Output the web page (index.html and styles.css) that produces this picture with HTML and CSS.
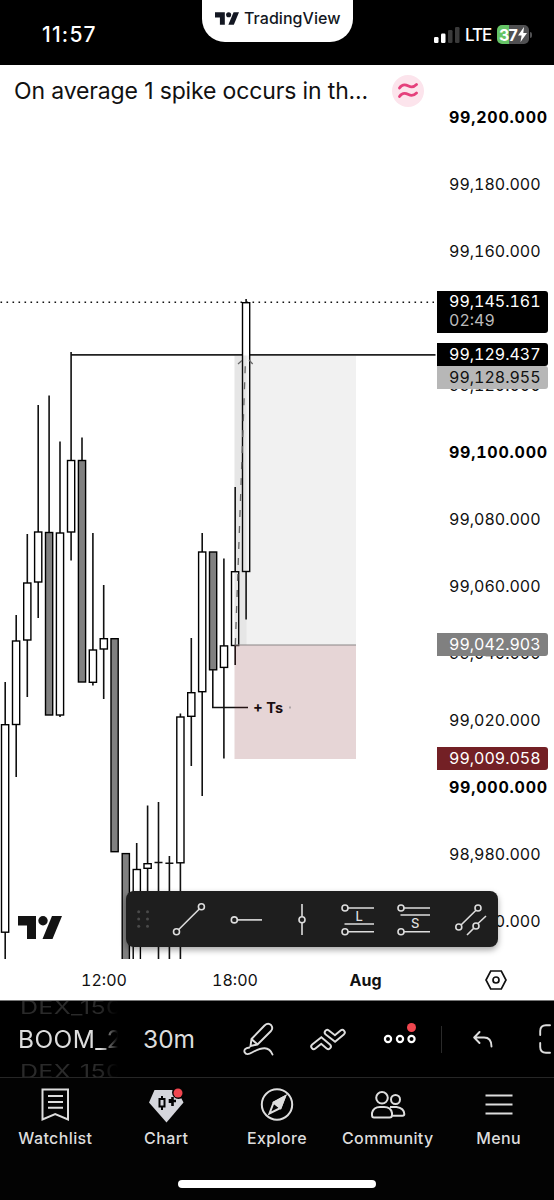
FILE: index.html
```
<!DOCTYPE html>
<html lang="en">
<head>
<meta charset="utf-8">
<title>TradingView</title>
<link rel="stylesheet" href="styles.css">
</head>
<body>
<div class="app">
  <header class="status">
    <div class="clock">11:57</div>
    <div class="brand">
      <svg class="brand-mark" width="24" height="13" viewBox="0 0 44 23"><path d="M0 0h18v23H9V9.500H0z"/><circle cx="25" cy="4.700" r="4.700"/><path d="M34 0h10L34.500 23H24.500z"/></svg>
      <span class="brand-name">TradingView</span>
    </div>
    <div class="indicators">
      <svg width="26" height="18" viewBox="0 0 26 18"><rect x="0" y="11" width="4.500" height="6" rx="1.200" fill="#fff"/><rect x="7" y="7.500" width="4.500" height="9.500" rx="1.200" fill="#fff"/><rect x="14" y="4" width="4.500" height="13" rx="1.200" fill="#3a3a3a"/><rect x="21" y="1" width="4.500" height="16" rx="1.200" fill="#3a3a3a"/></svg>
      <span class="network">LTE</span>
      <div class="battery"><span>37</span><svg width="9" height="15" viewBox="0 0 9 15"><path d="M6 0L0 8.500h3.600L2.500 15 9 6H5.300z" fill="#fff"/></svg></div>
      <i class="battery-tip"></i>
    </div>
  </header>

  <main class="chart">
    <div class="legend">
      <span class="legend-text">On average 1 spike occurs in th...</span>
      <span class="legend-badge"><svg width="20" height="18" viewBox="0 0 20 18"><path d="M1.500 6C4.500 1.500 7.500 2.500 10.500 4S16 5 18.500 2.500M1.500 14.500C4.500 10 7.500 11 10.500 12.500S16 13.500 18.500 11"/></svg></span>
    </div>
    <svg class="plot" width="437" height="894" viewBox="0 65 437 894">
      <path class="last-price" d="M0.500 302.300H434"/>
      <path class="level" d="M71 354.800H435.500"/>
      <g class="wicks">
        <path d="M5.200 682V724M5.200 932V959M16.200 615V641M16.200 724V777M27.300 534V583M27.300 640V697M38.200 405V532M38.200 582V618M49.100 395.500V532M60 441.500V533M60 715V717M71.100 352V460M71.100 532V560.500M82 437.500V460M92.900 533V650M92.900 682V685.500M103.700 585V638M103.700 649V699M136.700 843V869M147.600 805.500V863M147.600 868V930M158.500 802V959M169.400 856V959M180.400 713.500V717M180.400 863V959M191.300 638V693M191.300 716V766M202.200 533V552M202.200 691V796M223.900 558.500V646M223.900 667V758.500M235.200 487V571M235.200 645V665M246.100 299V302M246.100 571V619.500M154.500 862.500H162.500M165.400 863.200H173.400"/>
      </g>
      <g class="up">
        <rect x="1.500" y="724.700" width="7.200" height="207.500"/><rect x="12.500" y="641" width="7.200" height="83.500"/><rect x="23.700" y="583" width="7.200" height="57"/><rect x="34.600" y="532" width="7.200" height="50"/><rect x="56.400" y="533" width="7.200" height="182"/><rect x="67.500" y="460.500" width="7.200" height="71.500"/><rect x="89.300" y="650" width="7.200" height="32.300"/><rect x="100.200" y="638.700" width="7.200" height="10.300"/><rect x="133.200" y="869.500" width="7.200" height="100"/><rect x="144" y="863.700" width="7.200" height="4.600"/><rect x="176.800" y="717" width="7.200" height="145.800"/><rect x="187.700" y="692.700" width="7.200" height="23.600"/><rect x="198.600" y="552" width="7.200" height="139.700"/><rect x="220.400" y="645.900" width="7.200" height="21.500"/><rect x="231.500" y="571.700" width="7.200" height="73.800"/><rect x="242.500" y="302.700" width="7.200" height="268.800"/>
      </g>
      <g class="down">
        <rect x="45.500" y="532.500" width="7.200" height="182.500"/><rect x="78.400" y="460.500" width="7.200" height="221.500"/><rect x="111" y="638.700" width="7.200" height="213"/><rect x="122.200" y="853.600" width="7.200" height="120"/><rect x="209.500" y="552" width="7.200" height="117.800"/>
      </g>
      <path class="callout" d="M212.800 670V707.500H248"/>
      <rect class="profit" x="234.500" y="355.500" width="121.500" height="289.500"/>
      <rect class="profit-progress" x="234.500" y="355.500" width="12" height="289.500"/>
      <rect class="loss" x="234.500" y="645" width="121.500" height="114"/>
      <path class="entry" d="M234.500 645H356"/>
      <path class="trend" d="M235.300 645L245.500 359"/>
      <path class="arrow" d="M238 364L242 360.500M249 360L252.700 364"/>
      <text class="note" x="253" y="712.500">+ Ts</text>
      <rect x="289.500" y="706.500" width="1" height="2" fill="#777"/>
    </svg>
    <aside class="prices">
      <span class="strong">99,200.000</span><span>99,180.000</span><span>99,160.000</span><span></span><span>99,120.000</span><span class="strong">99,100.000</span><span>99,080.000</span><span>99,060.000</span><span>99,040.000</span><span>99,020.000</span><span class="strong">99,000.000</span><span>98,980.000</span><span>98,960.000</span>
      <div class="tag tag-last">99,145.161<small>02:49</small></div>
      <div class="tag tag-level">99,129.437</div>
      <div class="tag tag-target">99,128.955</div>
      <div class="tag tag-entry">99,042.903</div>
      <div class="tag tag-stop">99,009.058</div>
    </aside>
    <div class="times">
      <span>12:00</span><span>18:00</span><b>Aug</b>
      <svg width="24" height="22" viewBox="0 0 24 22"><path d="M6.700 2h10.600L22 11l-4.700 9H6.700L2 11z"/><circle cx="12" cy="11" r="3"/></svg>
    </div>
    <svg class="watermark" width="44" height="23" viewBox="0 0 44 23"><path d="M0 0h18v23H9V9.500H0z"/><circle cx="25" cy="4.700" r="4.700"/><path d="M34 0h10L34.500 23H24.500z"/></svg>
    <div class="tools">
      <svg class="grip" width="12" height="18" viewBox="0 0 12 18"><circle cx="1.700" cy="1.700" r="1.500"/><circle cx="10.500" cy="1.700" r="1.500"/><circle cx="1.700" cy="9" r="1.500"/><circle cx="10.500" cy="9" r="1.500"/><circle cx="1.700" cy="16.300" r="1.500"/><circle cx="10.500" cy="16.300" r="1.500"/></svg>
      <svg width="36" height="36" viewBox="0 0 36 36"><path d="M7.500 28.700L28.300 8"/><circle cx="5.500" cy="30.800" r="3"/><circle cx="30.400" cy="5.800" r="3"/></svg>
      <svg width="36" height="36" viewBox="0 0 36 36"><path d="M9.500 18.900H34"/><circle cx="6.300" cy="18.900" r="3"/></svg>
      <svg width="36" height="36" viewBox="0 0 36 36"><path d="M18 3V15.500M18 21.500V34"/><circle cx="18" cy="18.700" r="3"/></svg>
      <svg width="36" height="36" viewBox="0 0 36 36"><path d="M7 7H33M3.500 23H33M7 30.700H33"/><circle cx="4" cy="7" r="3"/><circle cx="4" cy="30.700" r="3"/><text x="14.500" y="20">L</text></svg>
      <svg width="36" height="36" viewBox="0 0 36 36"><path d="M7 7H33M3.500 14H33M7 30.700H33"/><circle cx="4" cy="7" r="3"/><circle cx="4" cy="30.700" r="3"/><text x="14" y="27">S</text></svg>
      <svg width="36" height="36" viewBox="0 0 36 36"><path d="M7 24L22 9.200M13 34L19.500 27.500M24 22.500L32 15"/><circle cx="4.800" cy="26" r="3"/><circle cx="24" cy="7" r="3"/><circle cx="22" cy="25" r="3"/></svg>
    </div>
  </main>

  <section class="actions">
    <div class="wheel"><span class="ghost">DEX_150</span><span class="symbol">BOOM_2</span><span class="ghost">DEX_150</span></div>
    <div class="interval">30m</div>
    <svg class="act draw" width="32" height="34" viewBox="0 0 32 34"><path d="M8.500 17L21.500 3.500Q25 .300 28 3 30.500 6 28 9L14.500 22.500 7.500 24zM9 17.500L14 22M6.500 25.500C2 26 1 28 1.500 30Q3.500 34 9 30.500C19 25 26 24 29.500 32.500"/></svg>
    <svg class="act patterns" width="36" height="23" viewBox="0 0 36 23"><path class="band" d="M3.800 18.500L11.300 12.500 18.300 18.500"/><path class="core" d="M3.800 18.500L11.300 12.500 18.300 18.500"/><path class="band" d="M17.300 4.500L25 10.500 32.200 4.500"/><path class="core" d="M17.300 4.500L25 10.500 32.200 4.500"/></svg>
    <svg class="act more" width="34" height="22" viewBox="0 0 34 22"><circle cx="5" cy="16" r="3.100"/><circle cx="17" cy="16" r="3.100"/><circle cx="28.500" cy="16" r="3.100"/><circle class="dot" cx="28.500" cy="4.500" r="4.500"/></svg>
    <i class="divider"></i>
    <svg class="act undo" width="20" height="17" viewBox="0 0 20 17"><path d="M6.500 1L1.200 6.500 6.500 12M1.500 6.500H11Q18.500 6.500 18.500 15.500"/></svg>
    <svg class="act expand" width="15" height="30" viewBox="0 0 15 30"><path d="M1.200 11V7Q1.200 1.300 7 1.300H11M1.200 19V23Q1.200 28.700 7 28.700H11"/></svg>
  </section>

  <nav class="nav">
    <a><svg width="36" height="34" viewBox="0 0 36 34"><path d="M5.500 1.500H31V31.500L18.200 26.200 5.500 31.500zM11 8H26M11 14H26M11 19.700H26"/></svg>Watchlist</a>
    <a><svg class="gem" width="36" height="34" viewBox="0 0 36 34"><path class="gem-body" d="M6.500 2H29L35.500 14.500 18.500 34.500 1 14.500z"/><path class="gem-cut" d="M14 8V11M14 18.500V22M11.500 11H16.500V18.500H11.500z"/><path class="gem-cut thick" d="M24.500 9V18M22 11V15M24 13H28"/><circle class="gem-ring" cx="30.500" cy="4.500" r="6.500"/><circle class="dot" cx="30" cy="5" r="4.500"/></svg>Chart</a>
    <a><svg width="36" height="34" viewBox="0 0 36 34"><circle cx="18" cy="16.500" r="15.200"/><path d="M26 8.500L21.500 20 10.500 25.500 14.700 14.500zM15 15L21 19.700"/><path fill="#ddd" d="M26 8.500L21.500 20 15 14.500z"/></svg>Explore</a>
    <a><svg width="36" height="34" viewBox="0 0 36 34"><circle cx="12" cy="9.800" r="5.800"/><circle cx="25.500" cy="11.500" r="4.500"/><path d="M2 27V25Q3.500 19 10 19H14Q21 19 22 25V27Q22 29.500 19.500 29.500H4Q2 29.500 2 27zM20 19H26.500Q34 20 34.300 26 34.300 27.700 32.500 27.700H22"/></svg>Community</a>
    <a><svg width="36" height="34" viewBox="0 0 36 34"><path d="M4.500 7.500H31.500M4.500 16.500H31.500M4.500 25.500H31.500"/></svg>Menu</a>
    <i class="home"></i>
  </nav>
</div>
</body>
</html>
```
FILE: styles.css
```
* { box-sizing: border-box; }
body { margin: 0; background: #000; font-family: Inter, "Liberation Sans", sans-serif; }
svg { display: block; flex: none; }
.app { width: 554px; height: 1200px; display: flex; flex-direction: column; overflow: hidden; }

.status { height: 65px; background: #000; color: #fff; display: grid; grid-template-columns: 202px 151px 201px; flex: none; }
.clock { padding: 21px 0 0 42px; font-size: 21px; line-height: 28px; font-weight: 500; letter-spacing: 1.2px; }
.brand { height: 42px; background: #fff; border-radius: 0 0 23px 23px; display: flex; align-items: center; gap: 5px; padding: 0 0 6px 13px; color: #131722; }
.brand-mark { fill: #131722; }
.brand-name { font-size: 16px; font-weight: 500; letter-spacing: 0.05px; }
.indicators { display: flex; align-items: center; padding: 2px 0 0 81px; height: 67px; }
.network { font-size: 17px; font-weight: 500; margin-left: 5px; width: 32px; letter-spacing: -1px; }
.battery { width: 32px; height: 19px; border-radius: 5px; background: linear-gradient(90deg, #65c466 37%, #505052 37%); display: flex; align-items: center; justify-content: center; gap: 1px; font-size: 16px; font-weight: 700; letter-spacing: -0.7px; }
.battery-tip { width: 2px; height: 6px; margin-left: 1px; border-radius: 0 2px 2px 0; background: #505052; }

.chart { position: relative; height: 936px; flex: none; background: #fff; display: grid; grid-template-columns: 437px 117px; grid-template-rows: 894px 42px; color: #111; border-bottom: 1px solid #777; }
.legend { position: absolute; left: 14px; top: 9px; height: 34px; display: flex; align-items: center; z-index: 1; }
.legend-text { width: 378px; font-size: 23px; white-space: nowrap; letter-spacing: -0.14px; }
.legend-badge { width: 32px; height: 32px; border-radius: 50%; background: #fce4ec; display: grid; place-items: center; }
.legend-badge path { fill: none; stroke: #e5407c; stroke-width: 2.8; stroke-linecap: round; }
.last-price { stroke: #111; stroke-width: 1.5; stroke-dasharray: 1.6 4.4; }
.level { stroke: #222; stroke-width: 1.7; }
.wicks, .callout { fill: none; stroke: #111; stroke-width: 1.6; }
.up rect { fill: #fff; stroke: #000; stroke-width: 1.4; }
.down rect { fill: #808080; stroke: #000; stroke-width: 1.4; }
.profit { fill: rgba(80, 80, 80, .08); }
.profit-progress { fill: rgba(60, 60, 60, .055); }
.loss { fill: rgba(120, 30, 35, .19); }
.entry { stroke: #8a8585; stroke-width: 1.2; }
.trend { stroke: #666; stroke-width: 1.3; stroke-dasharray: 7 9; fill: none; }
.arrow { stroke: #666; stroke-width: 1.2; fill: none; }
.note { font-size: 14.5px; font-weight: 700; fill: #1a0e10; }

.prices { position: relative; display: flex; flex-direction: column; padding: 20px 0 0 12px; height: 894px; overflow: hidden; font-size: 16px; letter-spacing: 0; font-variant-numeric: tabular-nums; }
.prices > span { height: 67px; line-height: 65px; flex: none; }
.prices .strong { font-weight: 700; color: #000; letter-spacing: .75px; }
.tag { position: absolute; left: 0; width: 111px; height: 23px; line-height: 22px; padding-left: 12px; border-radius: 0 3px 3px 0; color: #fff; }
.tag small { display: block; font-size: 16px; line-height: 17px; color: #bbb; }
.tag-last { top: 226px; height: 42px; line-height: 21px; background: #000; }
.tag-level { top: 278px; background: #000; }
.tag-target { top: 301px; background: #b7b7b7; color: #111; }
.tag-entry { top: 568px; background: #808080; }
.tag-stop { top: 682px; background: #732025; }

.times { grid-column: 1 / 3; display: grid; grid-template-columns: 38px 131px 131px 131px 123px; align-items: center; text-align: center; font-size: 16px; letter-spacing: 0; font-variant-numeric: tabular-nums; }
.times span { padding-left: 1px; }
.times span:first-child { grid-column: 2; }
.times b { font-weight: 700; }
.times svg { margin-left: 53px; fill: none; stroke: #111; stroke-width: 1.7; }
.watermark { position: absolute; left: 18px; top: 851px; fill: #131313; }
.tools { position: absolute; left: 126px; top: 826px; width: 372px; height: 56px; border-radius: 8px; background: #1e1e1e; box-shadow: 0 3px 6px rgba(0, 0, 0, .35); display: flex; align-items: center; padding-left: 11px; gap: 20.5px; }
.tools svg { fill: none; stroke: #ddd; stroke-width: 1.6; }
.tools .grip { fill: #4a4a4a; stroke: none; margin-right: 1.5px; }
.tools text { font-size: 13px; fill: #ddd; stroke: none; font-weight: 500; }

.actions { height: 77px; flex: none; background: #000; color: #ddd; display: flex; align-items: center; border-bottom: 1px solid #262626; overflow: hidden; }
.wheel { width: 100px; height: 76px; margin-left: 18px; overflow: hidden; display: flex; flex-direction: column; justify-content: center; font-size: 24.5px; line-height: 32px; -webkit-mask-image: linear-gradient(90deg, #000 82%, transparent); mask-image: linear-gradient(90deg, #000 82%, transparent); flex: none; }
.wheel span { display: block; height: 32px; flex: none; white-space: nowrap; }
.wheel .symbol { letter-spacing: .4px; }
.wheel .ghost { transform: translateY(1px) scaleY(.72); color: #2a2a2a; font-size: 25px; padding-left: 2px; letter-spacing: .3px; }
.interval { width: 102px; margin-left: 25px; font-size: 24.5px; }
.act { fill: none; stroke: #ddd; stroke-width: 1.9; stroke-linecap: round; stroke-linejoin: round; }
.draw { margin-left: -2px; }
.patterns { margin-left: 35px; }
.patterns .band { stroke-width: 7; stroke-linejoin: miter; }
.patterns .core { stroke: #000; stroke-width: 3.2; stroke-linejoin: miter; }
.more { margin-left: 37px; margin-top: -10px; stroke: #fff; stroke-width: 2.2; }
.dot { fill: #f0464f; stroke: none; }
.divider { width: 1px; height: 27px; background: #2a2a2a; margin-left: 24px; }
.undo { margin-left: 31px; }
.expand { margin-left: 46px; }

.nav { flex: 1; position: relative; background: #030303; display: grid; grid-template-columns: repeat(5, 110.8px); color: #ddd; font-size: 16px; font-weight: 500; }
.nav a { display: flex; flex-direction: column; align-items: center; padding-top: 10px; gap: 6px; line-height: 20px; letter-spacing: .4px; }
.nav svg { fill: none; stroke: #ddd; stroke-width: 2; overflow: visible; }
.nav .gem-body { fill: #d5d6dc; stroke: none; }
.nav .gem-cut { stroke: #030303; }
.nav .thick { stroke-width: 2.6; }
.nav .gem-ring { fill: #030303; stroke: none; }
.nav .dot { fill: #f0464f; stroke: none; }
.home { position: absolute; left: 178px; bottom: 12px; width: 198px; height: 8px; border-radius: 4px; background: #fff; }
```
